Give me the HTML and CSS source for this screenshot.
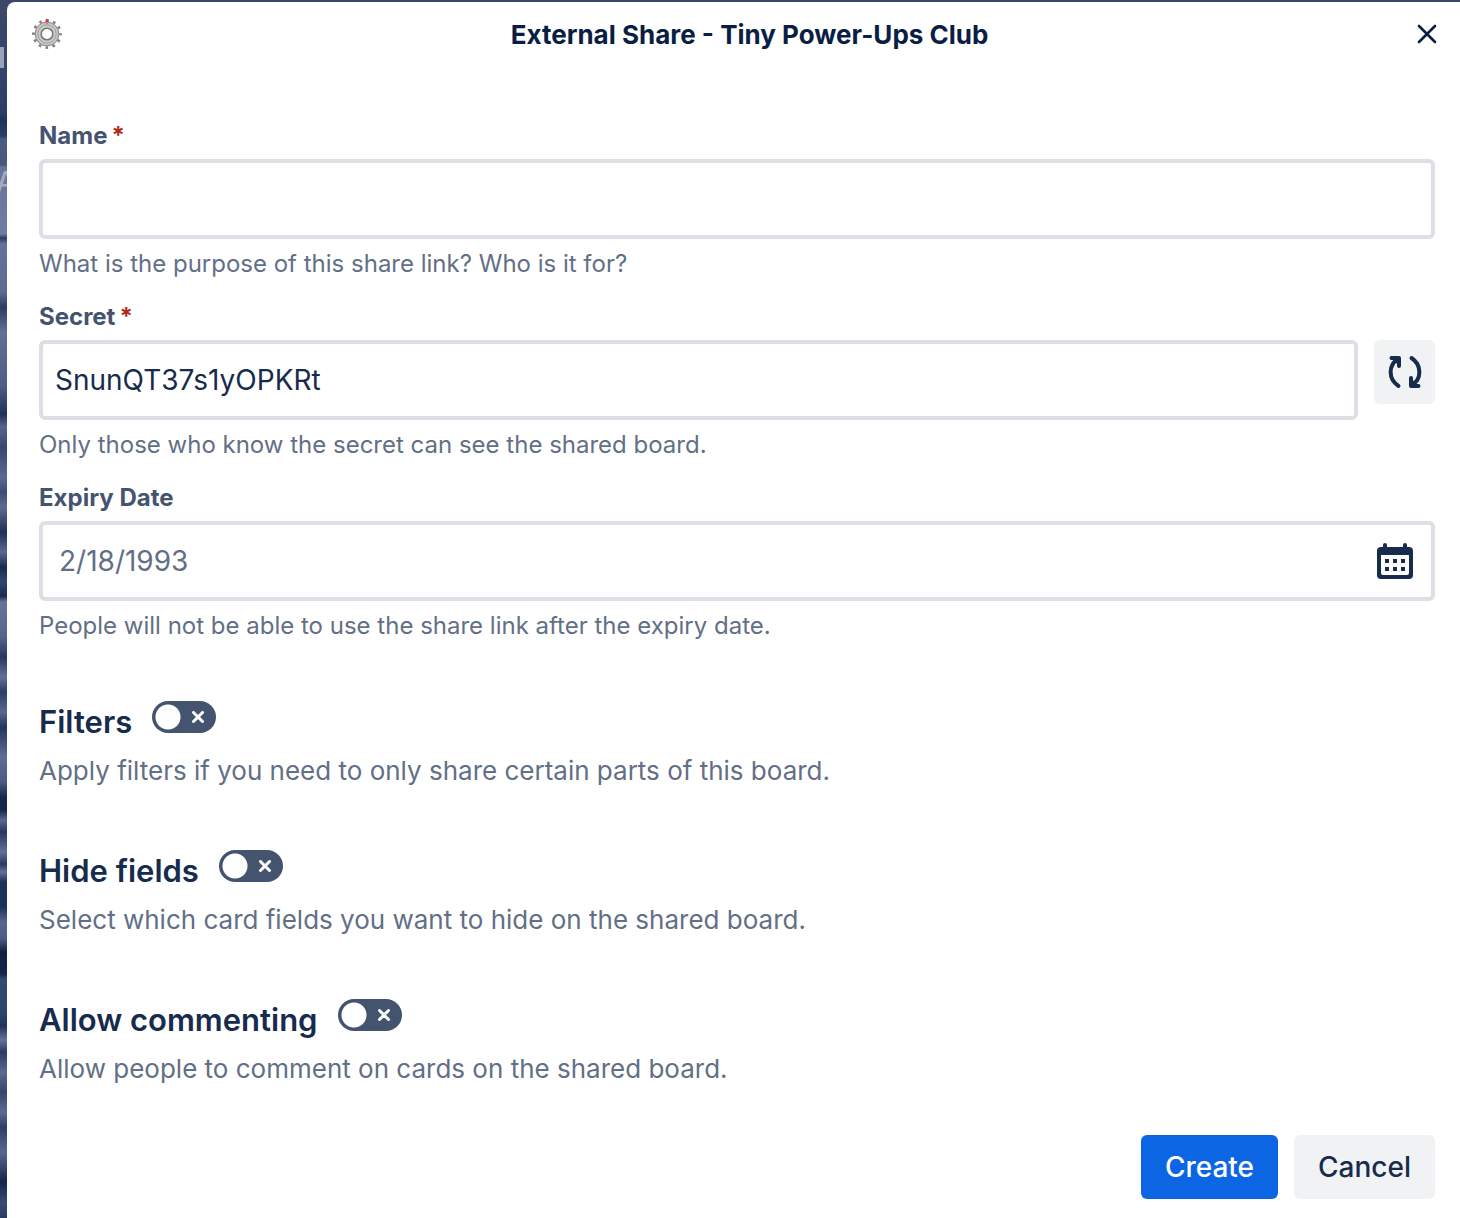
FILE: index.html
```html
<!DOCTYPE html>
<html lang="en">
<head>
<meta charset="utf-8">
<meta name="viewport" content="width=device-width, initial-scale=1">
<title>External Share - Tiny Power-Ups Club</title>
<link rel="stylesheet" href="styles.css">
</head>
<body>
<div class="board" aria-hidden="true">
  <span class="board-bar"></span>
  <span class="board-letter">A</span>
</div>
<main class="modal">
  <header class="modal-header">
    <svg class="gear" viewBox="0 0 30 30" aria-hidden="true">
      <circle cx="15" cy="15" r="13.3" fill="none" stroke="#85817d" stroke-width="3.200" stroke-dasharray="2.600 4.364" stroke-dashoffset="1.300"/>
      <circle cx="15" cy="15" r="9" fill="none" stroke="#cbcbca" stroke-width="6.4"/>
      <circle cx="15" cy="15" r="11.800" fill="none" stroke="#8b8987"/>
      <circle cx="15" cy="15" r="9.2" fill="none" stroke="#9b9b9a"/>
      <circle cx="15" cy="15" r="5.8" fill="#fff" stroke="#777" stroke-width="1.6"/>
      <path d="M13.800 0h2.400l.6 3h-3.600z" fill="#d93a4a"/>
      <path d="M14 4.500h2" stroke="#d98088"/>
    </svg>
    <h1 class="modal-title">External Share - Tiny Power-Ups Club</h1>
    <button class="close" type="button" aria-label="Close">
      <svg viewBox="0 0 20 20" width="20" height="20"><path d="M2 2l16 16M18 2L2 18" stroke="#091e42" stroke-width="2.6" stroke-linecap="round"/></svg>
    </button>
  </header>
  <form class="form">
    <div class="field">
      <label class="label" for="name">Name<span class="required">*</span></label>
      <input class="input" id="name" type="text">
      <p class="help">What is the purpose of this share link? Who is it for?</p>
    </div>
    <div class="field">
      <label class="label" for="secret">Secret<span class="required">*</span></label>
      <div class="input-row">
        <input class="input" id="secret" type="text" value="SnunQT37s1yOPKRt">
        <button class="refresh" type="button" aria-label="Generate new secret">
          <svg viewBox="0 0 34 34" width="34" height="34" fill="none" stroke="#172b4d" stroke-width="4" stroke-linecap="round" stroke-linejoin="round"><path d="M3.500 3h7.500v8M10.500 3.500C0 10 0 24 10.500 31M23.500 3c10.500 7 10.500 21 0 27.500M30.500 31H23v-8"/><path fill="#172b4d" stroke="none" d="M6 3h6v8l-4-3zM28 31h-6v-8l4 3z"/></svg>
        </button>
      </div>
      <p class="help">Only those who know the secret can see the shared board.</p>
    </div>
    <div class="field">
      <label class="label" for="expiry">Expiry Date</label>
      <div class="date-box">
        <input class="date-input" id="expiry" type="text" placeholder="2/18/1993">
        <svg class="calendar" viewBox="0 0 36 36" aria-hidden="true"><path fill="#172b4d" fill-rule="evenodd" d="M6 4V2a2 2 0 0 1 4 0v2h16V2a2 2 0 0 1 4 0v2h2a4 4 0 0 1 4 4v24a4 4 0 0 1-4 4H4a4 4 0 0 1-4-4V8a4 4 0 0 1 4-4zM4 12v18a2 2 0 0 0 2 2h24a2 2 0 0 0 2-2V12z"/><path fill="#172b4d" d="M8 16h4v4H8zm8 0h4v4h-4zm8 0h4v4h-4zM8 24h4v4H8zm8 0h4v4h-4zm8 0h4v4h-4z"/></svg>
      </div>
      <p class="help">People will not be able to use the share link after the expiry date.</p>
    </div>
    <section class="option">
      <div class="option-head">
        <h2 class="option-title"><label for="filters">Filters</label></h2>
        <span class="toggle"><input class="toggle-input" id="filters" type="checkbox"><svg class="toggle-x" viewBox="0 0 12 12"><path d="M1.500 1.500l9 9M10.500 1.500l-9 9"/></svg></span>
      </div>
      <p class="option-text">Apply filters if you need to only share certain parts of this board.</p>
    </section>
    <section class="option">
      <div class="option-head">
        <h2 class="option-title"><label for="hide">Hide fields</label></h2>
        <span class="toggle"><input class="toggle-input" id="hide" type="checkbox"><svg class="toggle-x" viewBox="0 0 12 12"><path d="M1.500 1.500l9 9M10.500 1.500l-9 9"/></svg></span>
      </div>
      <p class="option-text">Select which card fields you want to hide on the shared board.</p>
    </section>
    <section class="option">
      <div class="option-head">
        <h2 class="option-title"><label for="comments">Allow commenting</label></h2>
        <span class="toggle"><input class="toggle-input" id="comments" type="checkbox"><svg class="toggle-x" viewBox="0 0 12 12"><path d="M1.500 1.500l9 9M10.500 1.500l-9 9"/></svg></span>
      </div>
      <p class="option-text">Allow people to comment on cards on the shared board.</p>
    </section>
    <footer class="actions">
      <button class="button button-primary" type="submit">Create</button>
      <button class="button" type="button">Cancel</button>
    </footer>
  </form>
</main>
</body>
</html>
```
FILE: styles.css
```css
* { box-sizing: border-box; }

body {
  margin: 0;
  padding: 2px 0 0 7px;
  min-height: 100vh;
  display: flex;
  background: #3b4668;
  color: #172b4d;
  font-family: Inter, "Liberation Sans", sans-serif;
}

h1, h2, p { margin: 0; }

button, input { font: inherit; color: inherit; }

/* Sliver of the board photo behind the dialog */
.board {
  position: absolute;
  inset: 2px auto 0 0;
  width: 15px;
  background: linear-gradient(#3c4769 0, #34446c 60px, #2c3e65 110px, #1e335a 118px, #2b3e66 134px, #4c5b80 137px, #48577b 163px, #68749a 165px, #707ca1 232px, #2c3d64 236px, #65719a 242px, #5d6a92 290px, #2a3c63 305px, #626f96 330px, #4c5c84 385px, #1e3259 412px, #566590 425px, #34476f 445px, #5c6992 475px, #3b4d76 490px, #5d6a90 505px, #1d3056 530px, #596891 550px, #182c50 565px, #32456e 580px, #182b50 594px, #67739b 600px, #56648c 635px, #23375e 655px, #636f98 675px, #2b3e66 690px, #586690 710px, #21365c 725px, #5e6b94 755px, #4b5a82 780px, #14284b 795px, #13274a 808px, #59678f 818px, #243960 830px, #626d98 850px, #263b61 862px, #64709a 870px, #1b3157 880px, #1b3158 905px, #58668e 920px, #4a5b83 937px, #111f3e 950px, #13254a 972px, #35496f 977px, #2e446d 1010px, #1d335b 1024px, #67719a 1038px, #283b62 1050px, #5a678f 1070px, #35466d 1090px, #5d6891 1110px, #2c3e65 1125px, #596790 1150px, #13254a 1180px, #384a72 1200px, #283b62 100%);
}

.board-bar {
  position: absolute;
  top: 45px;
  left: 0;
  width: 4px;
  height: 21px;
  background: #9aa1b8;
}

.board-letter {
  position: absolute;
  top: 164px;
  left: -4px;
  font-size: 28px;
  font-weight: 500;
  line-height: 32px;
  color: #a3aac1;
}

.modal {
  position: relative;
  flex: 1;
  min-width: 0;
  padding: 0 25px 19px 32px;
  background: #fff;
  border-radius: 8px 0 0 0;
}

.modal-header {
  display: flex;
  align-items: center;
  height: 64px;
  margin: 0 -2px 54px -7px;
}

.gear { width: 30px; height: 30px; }

.modal-title {
  flex: 1;
  padding: 2px 0 0 20px;
  color: #091e42;
  font-size: 26px;
  font-weight: 700;
  line-height: 32px;
  text-align: center;
}

.close {
  display: flex;
  padding: 0;
  border: 0;
  background: none;
}

.field { margin-bottom: 21px; }

.label {
  display: block;
  margin-bottom: 7px;
  color: #44546f;
  font-size: 24px;
  font-weight: 700;
  line-height: 32px;
}

.required {
  padding-left: 4px;
  color: #ae2a19;
}

.input, .date-box {
  display: block;
  width: 100%;
  height: 80px;
  border: 4px solid #dcdfe4;
  border-radius: 6px;
  background: #fff;
  font-size: 28px;
}

.input { padding: 0 12px; }

.input-row {
  display: flex;
  align-items: flex-start;
  gap: 16px;
}

.input-row .input { flex: 1; min-width: 0; }

.refresh {
  display: flex;
  align-items: center;
  justify-content: center;
  width: 61px;
  height: 64px;
  padding: 0;
  border: 0;
  border-radius: 6px;
  background: #f1f2f4;
}

.date-box {
  display: flex;
  align-items: center;
  padding: 0 18px 0 16px;
}

.date-input {
  flex: 1;
  min-width: 0;
  padding: 0;
  border: 0;
  background: none;
}

.date-input::placeholder { color: #626f86; opacity: 1; }

.calendar { width: 36px; height: 36px; overflow: visible; }

.help {
  margin-top: 9px;
  color: #626f86;
  font-size: 24px;
  line-height: 32px;
}

.option { margin-top: 59px; }

.option-head {
  display: flex;
  gap: 20px;
}

.option-title {
  font-size: 31px;
  font-weight: 600;
  line-height: 42px;
}

.toggle {
  position: relative;
  width: 64px;
  height: 32px;
}

.toggle-input {
  appearance: none;
  display: block;
  width: 64px;
  height: 32px;
  margin: 0;
  border-radius: 16px;
  background: radial-gradient(circle at 16px 16px, #fff 12px, #44546f 13px);
}

.toggle-x {
  position: absolute;
  top: 10px;
  right: 12px;
  width: 12px;
  height: 12px;
  stroke: #fff;
  stroke-width: 3;
  stroke-linecap: round;
  pointer-events: none;
}

.option-text {
  margin-top: 8px;
  color: #626f86;
  font-size: 26px;
  line-height: 40px;
}

.actions {
  display: flex;
  justify-content: flex-end;
  gap: 16px;
  margin-top: 46px;
}

.button {
  height: 64px;
  padding: 0 24px;
  border: 0;
  border-radius: 6px;
  background: #f1f2f4;
  font-size: 28px;
  font-weight: 500;
}

.button-primary {
  background: #0c66e4;
  color: #fff;
}
```
